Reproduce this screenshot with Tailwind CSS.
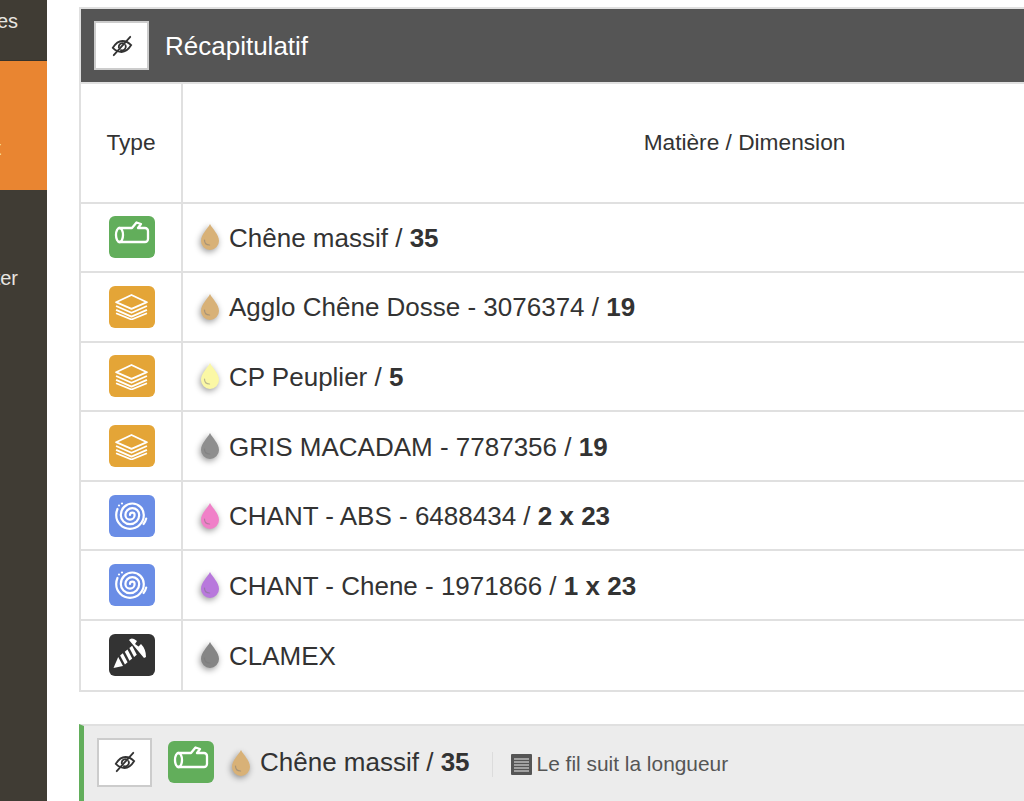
<!DOCTYPE html>
<html lang="fr">
  <head>
    <meta charset="UTF-8" />
    <title>Récapitulatif</title>
    <script src="https://cdn.jsdelivr.net/npm/@tailwindcss/browser@4"></script>
  </head>
  <body class="bg-white font-['Liberation_Sans',Arial,sans-serif] text-[#333]">
    <svg class="hidden">
      <symbol id="eye" viewBox="0 0 24 24" fill="none" stroke="currentColor" stroke-width="2" stroke-linecap="round">
        <path d="M2 14c3-5 6.500-7.500 10.500-7.500 3.500 0 6.500 1.500 9.500 4.500-3 5-6.500 7.500-10.500 7.500-3.500 0-6.500-1.500-9.500-4.500z" />
        <path d="M8.500 13.500a4 4 0 0 1 6-4" />
        <path d="M15.800 11a4 4 0 0 1-5 5.500" />
        <path d="M3 22 21 2" />
      </symbol>
      <symbol id="log" viewBox="0 0 46 42" fill="none" stroke="white" stroke-width="2.300" stroke-linecap="round" stroke-linejoin="round">
        <path d="M10 12H23L27.500 6.500 32 8 29 12H36a3 3 0 0 1 3 3V23a3 3 0 0 1-3 3H10" />
        <ellipse cx="10.500" cy="19" rx="3.500" ry="7" />
      </symbol>
      <symbol id="layers" viewBox="0 0 34 28" preserveAspectRatio="none" fill="none" stroke="white" stroke-width="1.800" stroke-linejoin="round">
        <path d="M17 2 32 9.500 17 16.500 2 9.500z" />
        <path d="M2 13.500 17 20.500 32 13.500" />
        <path d="M2 17.500 17 24.500 32 17.500" />
        <path d="M2 21 17 27.500 32 21" />
      </symbol>
      <symbol id="spiral" viewBox="0 0 46 42" fill="none" stroke="white" stroke-width="2.200" stroke-linecap="round">
        <path d="M21 20A2.300 2.300 0 0 1 25.600 20A4.600 4.600 0 0 1 16.400 20A6.900 6.900 0 0 1 30.200 20A9.200 9.200 0 0 1 11.800 20A11.500 11.500 0 0 1 34.800 20A13.800 13.800 0 0 1 7.200 20A15 15 0 0 1 8.500 14" />
        <path d="M37.200 23.500Q36.500 26.500 34.500 29" />
        <circle cx="13" cy="8.500" r="1.100" fill="white" stroke="none" />
        <circle cx="10" cy="10.500" r="1.100" fill="white" stroke="none" />
      </symbol>
      <symbol id="screw" viewBox="0 0 46 42" fill="white">
        <path d="M20 6Q22 3.500 25 5L28 7 26 10 29.500 12.500 32 10Q37 15 37 23L35 24z" />
        <path d="M23.100 11.800 20.400 14 25.100 23 27.800 20.700z" />
        <path d="M18.500 15.600 15.800 17.800 20.500 26.700 23.200 24.500z" />
        <path d="M13.800 19.300 11.100 21.500 15.900 30.500 18.600 28.300z" />
        <path d="M9.200 23.100 4.500 34 14 32.100z" />
      </symbol>
      <symbol id="drop" viewBox="0 0 20 28">
        <path fill="currentColor" d="M10 1C7.500 6 1 11.500 1 18a9 9 0 0 0 18 0C19 11.500 12.500 6 10 1z" />
        <path fill="none" stroke="#777" stroke-opacity=".5" stroke-width="1.200" stroke-linecap="round" d="M4.500 17c0 3 2 5 5 5" />
      </symbol>
    </svg>

    <div class="flex h-[801px] w-[1024px] overflow-hidden">
      <!-- sidebar, only its right edge is in view -->
      <aside class="flex w-[47px] shrink-0 flex-col bg-[#403c34] text-[20px] text-[#e8e6e1]">
        <div class="flex h-[61px] items-start justify-end overflow-hidden border-b border-[#35322b] pt-[6px] pr-[29px]"><span class="whitespace-nowrap">ères</span></div>
        <div class="flex h-[129px] items-center justify-end overflow-hidden bg-[#e98531] pt-[45px] pr-[46px] text-[#f8e6d4]"><span class="whitespace-nowrap">Débit</span></div>
        <div class="flex h-[179px] items-end justify-end overflow-hidden pr-[29px] pb-[76px]"><span class="whitespace-nowrap">Exporter</span></div>
      </aside>

      <main class="min-w-0 flex-1 pt-[7px] pl-[32px]">
        <section class="w-[1229px] border-2 border-[#e0e0e0]">
          <header class="flex h-[73px] items-center gap-4 bg-[#555] pl-[13px] text-white">
            <button class="flex h-[49px] w-[55px] items-center justify-center border-2 border-[#ccc] bg-white text-[#333]">
              <svg class="size-[22px]"><use href="#eye" /></svg>
            </button>
            <h2 class="mt-[2px] text-[26px]">Récapitulatif</h2>
          </header>

          <table class="w-full table-fixed border-collapse text-[26px]">
            <colgroup>
              <col class="w-[101px]" />
              <col />
            </colgroup>
            <thead>
              <tr class="h-[119.5px] border-t-2 border-[#e0e0e0] text-[22.7px] font-normal">
                <th class="border-r-2 border-[#e0e0e0] pb-[2px] font-normal">Type</th>
                <th class="pb-[2px] text-center font-normal">Matière / Dimension</th>
              </tr>
            </thead>
            <tbody>
              <tr class="h-[69.6px] border-t-2 border-[#e0e0e0]">
                <td class="border-r-2 border-[#e0e0e0] pl-[1px]"><span class="mx-auto flex h-[42px] w-[46px] items-center justify-center rounded-[6px] bg-[#62ae5b]"><svg class="h-[42px] w-[46px]"><use href="#log" /></svg></span></td>
                <td class="pl-[16px]"><div class="flex items-center gap-[8px]"><svg class="h-[28px] w-[22px] text-[#d8b177] drop-shadow-[-1px_2px_3px_rgba(0,0,0,.4)]"><use href="#drop" /></svg><span class="mt-[2px]">Chêne massif / <b>35</b></span></div></td>
              </tr>
              <tr class="h-[69.6px] border-t-2 border-[#e0e0e0]">
                <td class="border-r-2 border-[#e0e0e0] pl-[1px]"><span class="mx-auto flex h-[42px] w-[46px] items-center justify-center rounded-[6px] bg-[#e4a537]"><svg class="h-[27px] w-[35px]"><use href="#layers" /></svg></span></td>
                <td class="pl-[16px]"><div class="flex items-center gap-[8px]"><svg class="h-[28px] w-[22px] text-[#d8b177] drop-shadow-[-1px_2px_3px_rgba(0,0,0,.4)]"><use href="#drop" /></svg><span class="mt-[2px]">Agglo Chêne Dosse - 3076374 / <b>19</b></span></div></td>
              </tr>
              <tr class="h-[69.6px] border-t-2 border-[#e0e0e0]">
                <td class="border-r-2 border-[#e0e0e0] pl-[1px]"><span class="mx-auto flex h-[42px] w-[46px] items-center justify-center rounded-[6px] bg-[#e4a537]"><svg class="h-[27px] w-[35px]"><use href="#layers" /></svg></span></td>
                <td class="pl-[16px]"><div class="flex items-center gap-[8px]"><svg class="h-[28px] w-[22px] text-[#fbf8a5] drop-shadow-[-1px_2px_3px_rgba(0,0,0,.4)]"><use href="#drop" /></svg><span class="mt-[2px]">CP Peuplier / <b>5</b></span></div></td>
              </tr>
              <tr class="h-[69.6px] border-t-2 border-[#e0e0e0]">
                <td class="border-r-2 border-[#e0e0e0] pl-[1px]"><span class="mx-auto flex h-[42px] w-[46px] items-center justify-center rounded-[6px] bg-[#e4a537]"><svg class="h-[27px] w-[35px]"><use href="#layers" /></svg></span></td>
                <td class="pl-[16px]"><div class="flex items-center gap-[8px]"><svg class="h-[28px] w-[22px] text-[#8e8e8e] drop-shadow-[-1px_2px_3px_rgba(0,0,0,.4)]"><use href="#drop" /></svg><span class="mt-[2px]">GRIS MACADAM - 7787356 / <b>19</b></span></div></td>
              </tr>
              <tr class="h-[69.6px] border-t-2 border-[#e0e0e0]">
                <td class="border-r-2 border-[#e0e0e0] pl-[1px]"><span class="mx-auto flex h-[42px] w-[46px] items-center justify-center rounded-[6px] bg-[#6a8de6]"><svg class="h-[42px] w-[46px]"><use href="#spiral" /></svg></span></td>
                <td class="pl-[16px]"><div class="flex items-center gap-[8px]"><svg class="h-[28px] w-[22px] text-[#f080c8] drop-shadow-[-1px_2px_3px_rgba(0,0,0,.4)]"><use href="#drop" /></svg><span class="mt-[2px]">CHANT - ABS - 6488434 / <b>2 x 23</b></span></div></td>
              </tr>
              <tr class="h-[69.6px] border-t-2 border-[#e0e0e0]">
                <td class="border-r-2 border-[#e0e0e0] pl-[1px]"><span class="mx-auto flex h-[42px] w-[46px] items-center justify-center rounded-[6px] bg-[#6a8de6]"><svg class="h-[42px] w-[46px]"><use href="#spiral" /></svg></span></td>
                <td class="pl-[16px]"><div class="flex items-center gap-[8px]"><svg class="h-[28px] w-[22px] text-[#b878dc] drop-shadow-[-1px_2px_3px_rgba(0,0,0,.4)]"><use href="#drop" /></svg><span class="mt-[2px]">CHANT - Chene - 1971866 / <b>1 x 23</b></span></div></td>
              </tr>
              <tr class="h-[69.6px] border-t-2 border-[#e0e0e0]">
                <td class="border-r-2 border-[#e0e0e0] pl-[1px]"><span class="mx-auto flex h-[42px] w-[46px] items-center justify-center rounded-[6px] bg-[#333]"><svg class="h-[42px] w-[46px]"><use href="#screw" /></svg></span></td>
                <td class="pl-[16px]"><div class="flex items-center gap-[8px]"><svg class="h-[28px] w-[22px] text-[#858585] drop-shadow-[-1px_2px_3px_rgba(0,0,0,.4)]"><use href="#drop" /></svg><span class="mt-[2px]">CLAMEX</span></div></td>
              </tr>
            </tbody>
          </table>
        </section>

        <section class="mt-[32px] flex h-[90px] w-[1229px] items-start gap-4 border-t-2 border-l-[5px] border-t-[#e0e0e0] border-l-[#62ae5b] bg-[#ececec] pt-[12px] pl-[13px]">
          <button class="flex h-[49px] w-[55px] shrink-0 items-center justify-center border-2 border-[#ccc] bg-white text-[#333]">
            <svg class="size-[22px]"><use href="#eye" /></svg>
          </button>
          <span class="mt-[3px] flex h-[42px] w-[46px] shrink-0 items-center justify-center rounded-[6px] bg-[#62ae5b]"><svg class="h-[42px] w-[46px]"><use href="#log" /></svg></span>
          <div class="flex h-[50px] items-center gap-[8px] text-[26px]">
            <svg class="h-[28px] w-[22px] text-[#d8b177] drop-shadow-[-1px_2px_3px_rgba(0,0,0,.4)]"><use href="#drop" /></svg>
            <span>Chêne massif / <b>35</b></span>
          </div>
          <div class="mt-[14px] ml-[6px] flex h-[25px] items-center gap-[5px] border-l border-[#dcdcdc] pl-[18px] text-[20.900px] text-[#555]">
            <svg class="size-[21px] shrink-0" viewBox="0 0 21 21"><rect width="21" height="21" rx="1" fill="#555" /><path d="M3 5h15M3 8h15M3 11h15M3 14h15M3 17h15" stroke="#ececec" stroke-width="1.200" /></svg>
            <span class="whitespace-nowrap">Le fil suit la longueur</span>
          </div>
        </section>
      </main>
    </div>
  </body>
</html>
